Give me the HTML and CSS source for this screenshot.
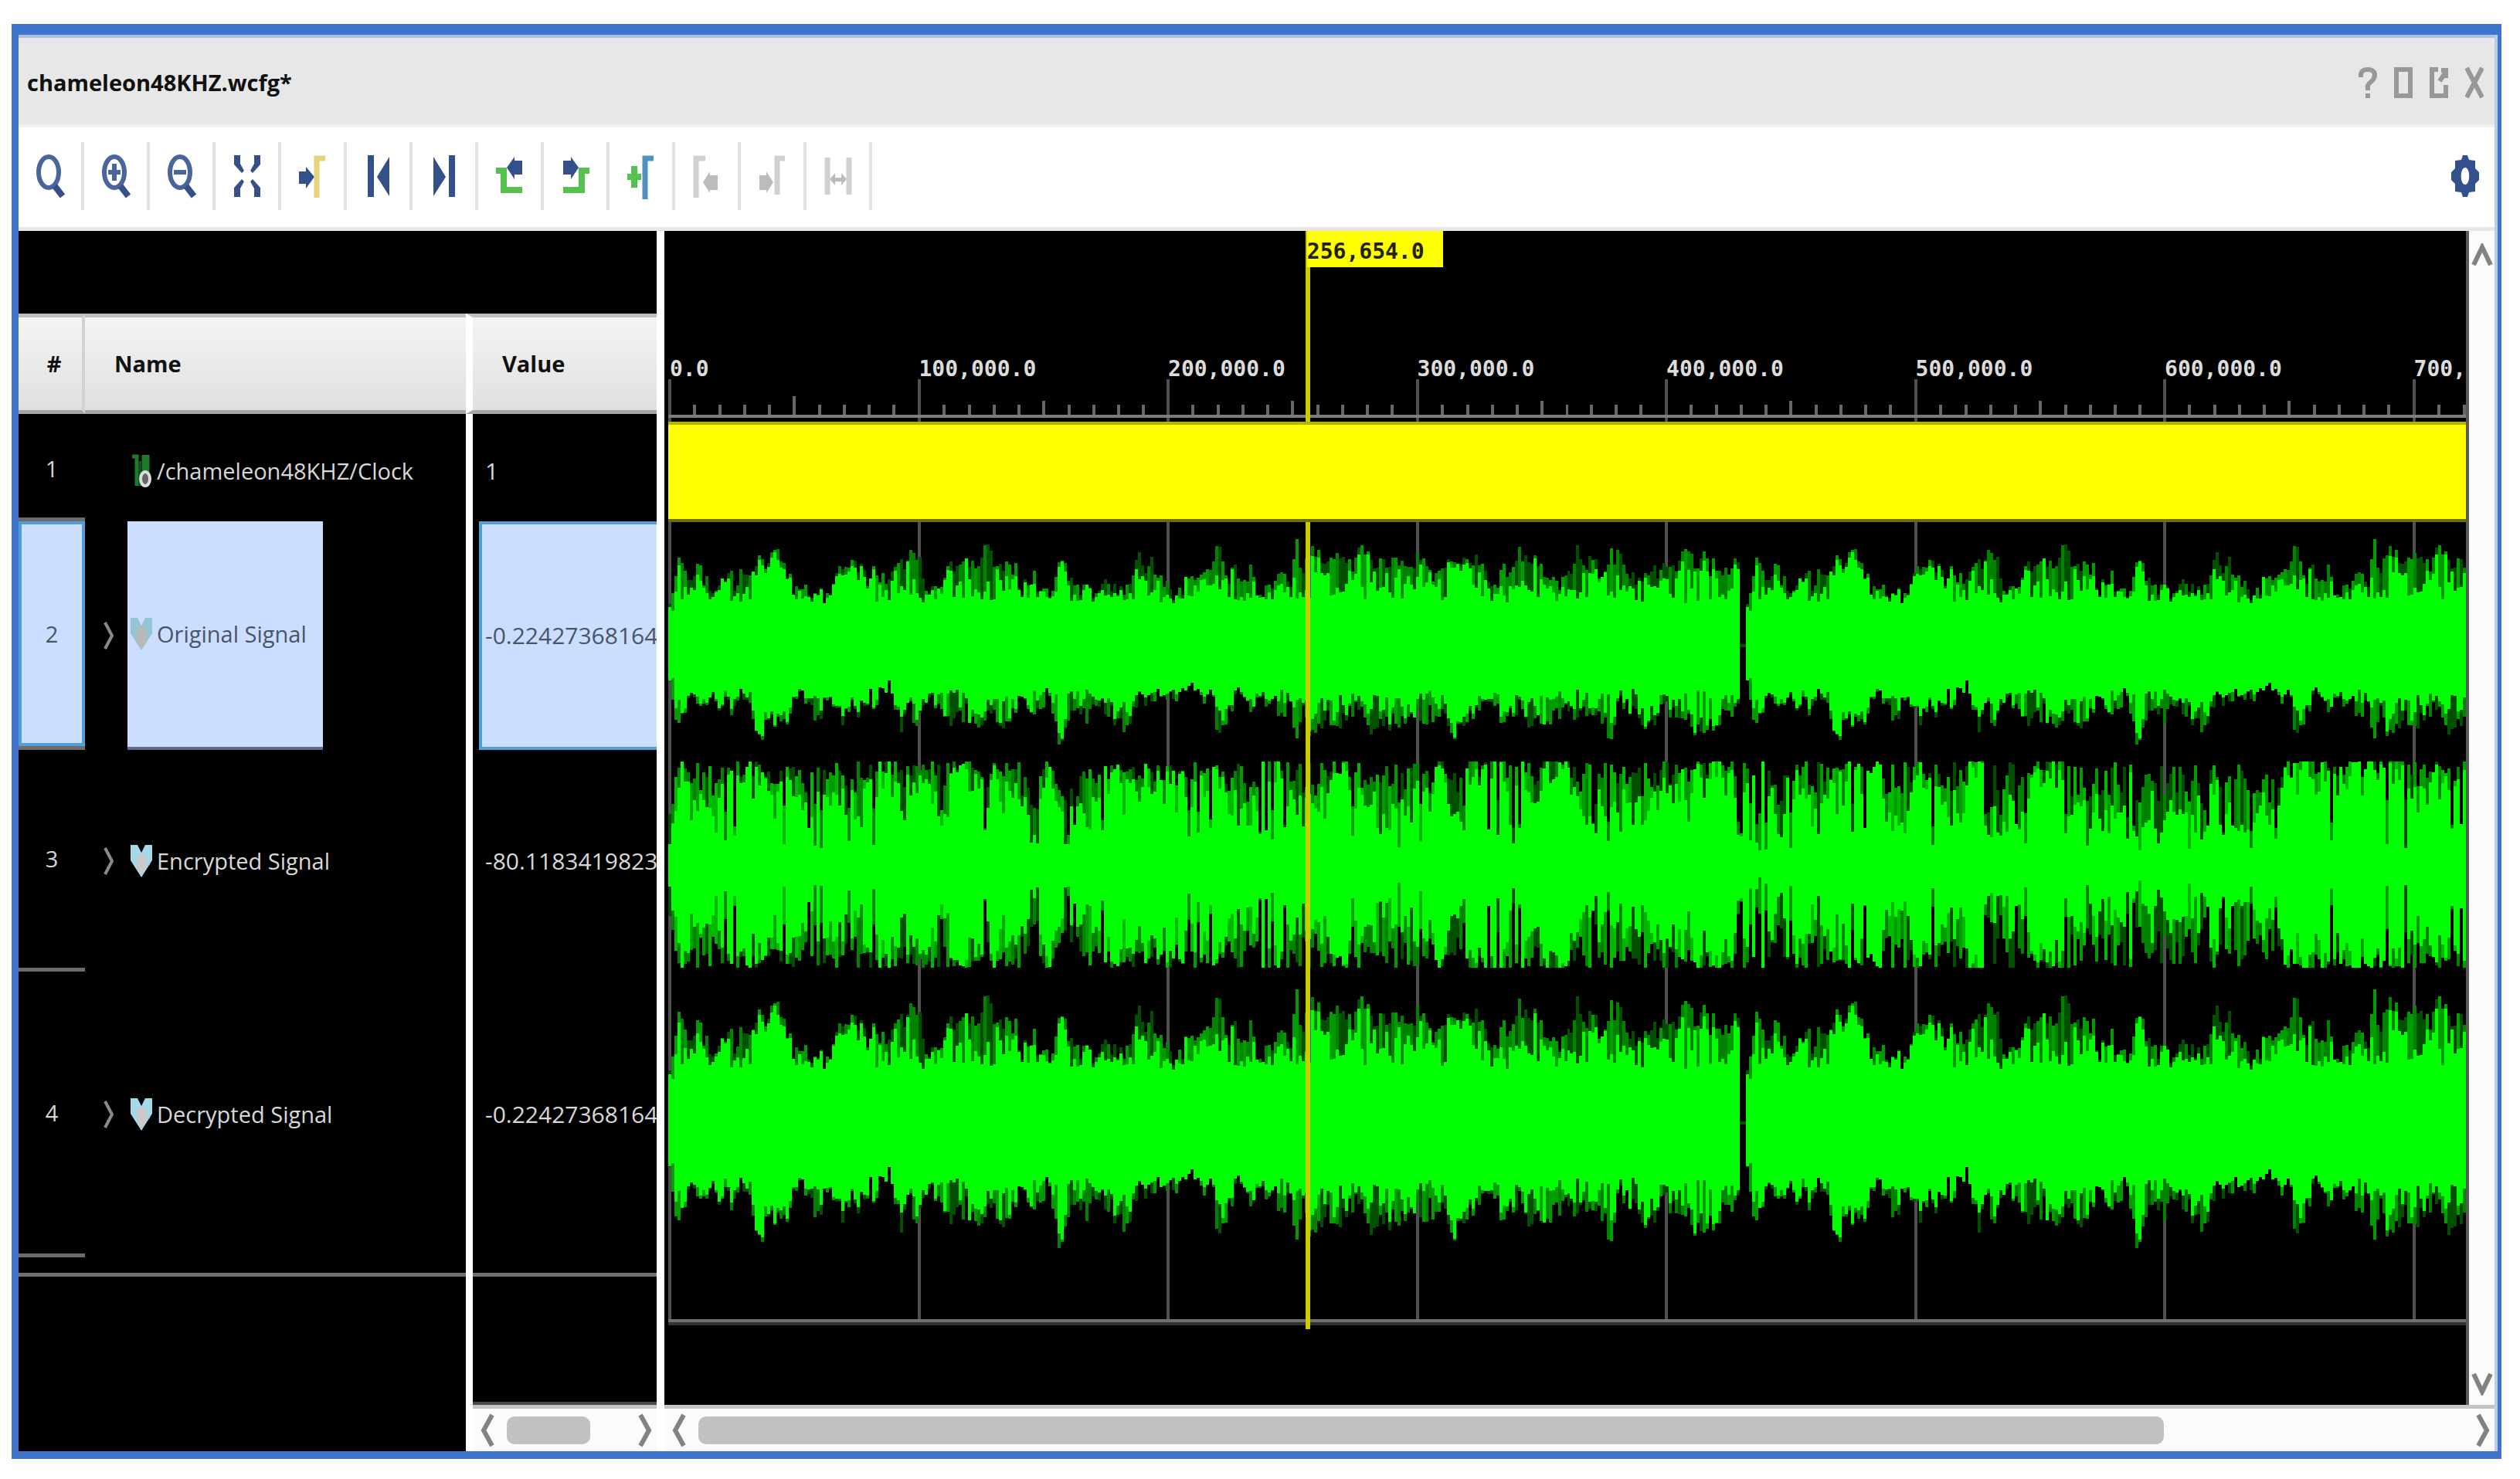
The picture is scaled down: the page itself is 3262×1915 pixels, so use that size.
FILE: index.html
```html
<!DOCTYPE html>
<html lang="en">
<head>
<meta charset="utf-8">
<title>chameleon48KHZ.wcfg*</title>
<link rel="stylesheet" href="styles.css">
</head>
<body>
<main class="window">
  <header class="titlebar">
    <h1 class="title">chameleon48KHZ.wcfg*</h1>
    <div class="window-buttons">
      <button class="win-btn" aria-label="Help"><svg viewBox="0 0 24 42"><path d="M3 14V10Q4 4 12 4T21 10Q21 16 16 20T12 27V31M12 35V41"/></svg></button>
      <button class="win-btn" aria-label="Maximize"><svg viewBox="0 0 24 42"><path d="M3 4H21V38H3Z"/></svg></button>
      <button class="win-btn" aria-label="Float"><svg viewBox="0 0 24 42"><path d="M11 4H3V38H21V24M13 19L21 7M15 5H22V15"/></svg></button>
      <button class="win-btn" aria-label="Close"><svg viewBox="0 0 24 42"><path d="M2 2L22 40M22 2L2 40"/></svg></button>
    </div>
  </header>

  <div class="toolbar">
    <button class="tool" aria-label="Find"><svg viewBox="0 0 44 60"><g class="navy"><ellipse cx="20" cy="25" rx="13" ry="20"/><path class="heavy" d="M28 43L38 56"/></g></svg></button>
    <button class="tool" aria-label="Zoom in"><svg viewBox="0 0 44 60"><g class="navy"><ellipse cx="20" cy="25" rx="13" ry="20"/><path class="heavy" d="M28 43L38 56"/><path d="M20 14V36M12 25H28"/></g></svg></button>
    <button class="tool" aria-label="Zoom out"><svg viewBox="0 0 44 60"><g class="navy"><ellipse cx="20" cy="25" rx="13" ry="20"/><path class="heavy" d="M28 43L38 56"/><path d="M12 25H28"/></g></svg></button>
    <button class="tool" aria-label="Zoom fit"><svg viewBox="0 0 44 60"><path class="navy-fill" d="M5 3H13V14L18 23L15 26L5 15ZM39 3H31V14L26 23L29 26L39 15ZM5 57H13V46L18 37L15 34L5 45ZM39 57H31V46L26 37L29 34L39 45Z"/></svg></button>
    <button class="tool" aria-label="Go to cursor"><svg viewBox="0 0 44 60"><path class="navy-fill" d="M4 24H13V18L24 31L13 46V40H4Z"/><path class="gold" d="M27 58V7H38"/></svg></button>
    <button class="tool" aria-label="Go to start"><svg viewBox="0 0 44 60"><path class="navy-fill" d="M8 3H16V57H8ZM36 5V56L20 31Z"/></svg></button>
    <button class="tool" aria-label="Go to end"><svg viewBox="0 0 44 60"><path class="navy-fill" d="M36 3H28V57H36ZM8 5V56L24 31Z"/></svg></button>
    <button class="tool" aria-label="Previous transition"><svg viewBox="0 0 44 60"><path class="green" d="M4 23H14V48H38"/><path class="navy-fill" d="M38 10H28V5L18 19L28 34V28H38Z"/></svg></button>
    <button class="tool" aria-label="Next transition"><svg viewBox="0 0 44 60"><path class="green" d="M40 23H30V48H6"/><path class="navy-fill" d="M6 10H16V5L26 19L16 34V28H6Z"/></svg></button>
    <button class="tool" aria-label="Add marker"><svg viewBox="0 0 44 60"><path class="green" d="M4 31H22M13 17V45"/><path class="blue" d="M27 60V7H38"/></svg></button>
    <button class="tool" aria-label="Previous marker" disabled><svg viewBox="0 0 44 60"><path class="grey" d="M8 58V7H20"/><path class="grey-fill" d="M36 29H26V24L17 38L26 52V48H36Z"/></svg></button>
    <button class="tool" aria-label="Next marker" disabled><svg viewBox="0 0 44 60"><path class="grey" d="M28 54V7H38"/><path class="grey-fill" d="M5 29H14V24L23 38L14 52V48H5Z"/></svg></button>
    <button class="tool" aria-label="Swap cursors" disabled><svg viewBox="0 0 44 60"><path class="grey" d="M8 6V54M36 6V54"/><path class="grey-fill" d="M11 34L18 26V32H26V26L33 34L26 42V37H18V42Z"/></svg></button>
    <button class="settings" aria-label="Settings"><svg viewBox="0 0 36 54"><path class="navy-fill" fill-rule="evenodd" d="M15 0H21L23 6L31 7V17L36 22V32L31 37V47L23 48L21 54H15L13 48L5 47V37L0 32V22L5 17V7L13 6ZM18 16C11 16 11 38 18 38S25 16 18 16Z"/></svg></button>
  </div>

  <div class="workspace">
    <section class="signals">
      <div class="band"></div>
      <table class="signal-table">
        <thead>
          <tr><th class="c-num">#</th><th class="c-name">Name</th><th class="c-value">Value</th></tr>
        </thead>
        <tbody>
          <tr class="r-clock">
            <td class="c-num">1</td>
            <td class="c-name"><div class="name-line"><span class="chevron"></span><span class="entry"><svg class="sig-icon" viewBox="0 0 30 50"><path d="M3 6H9V44M18 4V26M23 4V26" fill="none" stroke="#1f7a2c" stroke-width="5"/><path d="M13 12V44" fill="none" stroke="#14521d" stroke-width="4"/><ellipse cx="20" cy="35" rx="6" ry="9" fill="#666" stroke="#ddd" stroke-width="4"/></svg>/chameleon48KHZ/Clock</span></div></td>
            <td class="c-value"><div class="val">1</div></td>
          </tr>
          <tr class="r-original selected">
            <td class="c-num"><div class="num">2</div></td>
            <td class="c-name"><div class="name-line"><svg class="chevron" viewBox="0 0 16 40"><path d="M3 3L12 20L3 37"/></svg><span class="entry"><svg class="sig-icon" viewBox="0 0 30 50"><path d="M1 4H10L15 14L20 4H29V24L15 46L1 24Z" fill="#94c5d4"/><path d="M9 20L15 14L22 20V34L15 44L9 34Z" fill="#b9b9b5"/></svg>Original Signal</span></div></td>
            <td class="c-value"><div class="val">-0.22427368164</div></td>
          </tr>
          <tr class="r-encrypted">
            <td class="c-num">3</td>
            <td class="c-name"><div class="name-line"><svg class="chevron" viewBox="0 0 16 40"><path d="M3 3L12 20L3 37"/></svg><span class="entry"><svg class="sig-icon" viewBox="0 0 30 50"><path d="M1 4H10L15 14L20 4H29V24L15 46L1 24Z" fill="#a4d9ec"/><path d="M9 20L15 14L22 20V34L15 44L9 34Z" fill="#c9c9c9"/></svg>Encrypted Signal</span></div></td>
            <td class="c-value"><div class="val">-80.1183419823</div></td>
          </tr>
          <tr class="r-decrypted">
            <td class="c-num">4</td>
            <td class="c-name"><div class="name-line"><svg class="chevron" viewBox="0 0 16 40"><path d="M3 3L12 20L3 37"/></svg><span class="entry"><svg class="sig-icon" viewBox="0 0 30 50"><path d="M1 4H10L15 14L20 4H29V24L15 46L1 24Z" fill="#a4d9ec"/><path d="M9 20L15 14L22 20V34L15 44L9 34Z" fill="#c9c9c9"/></svg>Decrypted Signal</span></div></td>
            <td class="c-value"><div class="val">-0.22427368164</div></td>
          </tr>
        </tbody>
      </table>
      <div class="below">
        <div class="below-names"></div>
        <div class="below-values">
          <div class="below-fill"></div>
          <div class="hscroll">
            <svg class="arrow-h" viewBox="0 0 18 44"><path d="M15 2L4 22L15 42"/></svg>
            <div class="track"><div class="thumb thumb-values"></div></div>
            <svg class="arrow-h" viewBox="0 0 18 44"><path d="M3 2L14 22L3 42"/></svg>
          </div>
        </div>
      </div>
    </section>

    <section class="waves">
      <div class="wave-row">
        <div class="wave-view">
          <svg class="plot" id="plot" viewBox="0 0 2328 1515" preserveAspectRatio="none" shape-rendering="crispEdges" role="img" aria-label="Waveforms"></svg>
          <div class="ruler">
            <span>0.0</span><span>100,000.0</span><span>200,000.0</span><span>300,000.0</span><span>400,000.0</span><span>500,000.0</span><span>600,000.0</span><span>700,000.0</span>
          </div>
          <div class="cursor-label">256,654.0</div>
        </div>
        <div class="vscroll">
          <svg class="arrow-v" viewBox="0 0 28 30"><path d="M3 28L14 5L25 28"/></svg>
          <svg class="arrow-v" viewBox="0 0 28 30"><path d="M3 2L14 25L25 2"/></svg>
        </div>
      </div>
      <div class="hscroll">
        <svg class="arrow-h" viewBox="0 0 18 44"><path d="M15 2L4 22L15 42"/></svg>
        <div class="track"><div class="thumb thumb-waves"></div></div>
        <svg class="arrow-h" viewBox="0 0 18 44"><path d="M3 2L14 22L3 42"/></svg>
      </div>
    </section>
  </div>
</main>
<script src="waves.js"></script>
</body>
</html>
```
FILE: styles.css
```css
* { box-sizing: border-box; }

body {
  margin: 0;
  min-height: 100vh;
  padding: 31px 24px 26px 15px;
  display: flex;
  background: #fff;
  color: #d8d8d8;
  font-family: "Open Sans", "Noto Sans", sans-serif;
  font-size: 29px;
  line-height: 44px;
}

button {
  margin: 0;
  padding: 0;
  border: 0;
  background: none;
  font: inherit;
}

.window {
  flex: 1;
  min-width: 0;
  display: flex;
  flex-direction: column;
  background: #fff;
  border: 9px solid #3f74cd;
  border-top-width: 14px;
  border-right-width: 5px;
  border-bottom-width: 10px;
  box-shadow: inset -4px 0 #bccbe6;
}

/* Title bar */

.titlebar {
  display: flex;
  align-items: center;
  justify-content: space-between;
  height: 120px;
  margin-right: 4px;
  padding: 4px 14px 0 11px;
  background: #e7e7e7;
  border-top: 4px solid #aabfe0;
  border-bottom: 4px solid #f2f2f2;
}

.title {
  margin: 0;
  color: #111;
  font-size: 29px;
  font-weight: bold;
}

.window-buttons { display: flex; gap: 22px; }

.win-btn { width: 24px; height: 42px; }

.win-btn svg {
  display: block;
  width: 24px;
  height: 42px;
  fill: none;
  stroke: #989898;
  stroke-width: 6;
}

/* Toolbar */

.toolbar {
  display: flex;
  align-items: center;
  height: 134px;
  margin-right: 4px;
  padding-bottom: 4px;
  border-bottom: 5px solid #e7e7e7;
}

.tool {
  width: 85px;
  height: 88px;
  display: flex;
  align-items: center;
  justify-content: center;
  border-right: 4px solid #e2e2e2;
}

.tool svg { width: 44px; height: 60px; }

.settings { margin-left: auto; margin-right: 20px; }

.settings svg { display: block; width: 36px; height: 54px; }

.navy { fill: none; stroke: #4a659c; stroke-width: 6; }
.heavy { stroke: #33508b; stroke-width: 8; }
.navy-fill { fill: #33508b; }
.gold { fill: none; stroke: #e6d27a; stroke-width: 7; }
.green { fill: none; stroke: #55c24e; stroke-width: 8; }
.blue { fill: none; stroke: #4f91c3; stroke-width: 7; }
.grey { fill: none; stroke: #d0d0d0; stroke-width: 7; }
.grey-fill { fill: #bcbcbc; }

/* Panels */

.workspace { flex: 1; display: flex; min-height: 0; }

.signals {
  width: 826px;
  display: flex;
  flex-direction: column;
}

.band { height: 107px; background: #000; }

.signal-table {
  width: 100%;
  table-layout: fixed;
  border-collapse: separate;
  border-spacing: 0;
  background: #000;
}

.signal-table th {
  height: 130px;
  padding: 0;
  border-top: 5px solid #bebebe;
  border-bottom: 5px solid #a5a5a5;
  background: linear-gradient(#f4f4f4, #e0e0e2);
  color: #111;
  font-size: 29px;
  text-align: left;
}

.signal-table td { padding: 0; }

.c-num { width: 86px; text-align: center; }

.signal-table th.c-num {
  padding-left: 10px;
  text-align: center;
  border-right: 4px solid #d2d2d2;
}

.signal-table th.c-name { padding-left: 38px; }

.signal-table th.c-value {
  padding-left: 38px;
  border-left: 9px solid #fff;
}

.c-value { width: 247px; }

td.c-value { border-left: 9px solid #fff; }

td.c-num { border-bottom: 5px solid #6c6c6c; }

.r-clock { height: 139px; }
.r-original { height: 296px; }
.r-encrypted { height: 287px; }
.r-decrypted { height: 370px; }

.signal-table .r-clock td { padding-top: 8px; }

.name-line {
  height: 100%;
  display: flex;
  align-items: center;
  gap: 16px;
  padding-left: 23px;
}

.chevron {
  flex: none;
  width: 16px;
  height: 40px;
  fill: none;
  stroke: #8a8a8a;
  stroke-width: 4;
}

.entry {
  display: flex;
  align-items: center;
  gap: 5px;
  padding: 0 21px 0 3px;
  white-space: nowrap;
}

.sig-icon { flex: none; width: 30px; height: 50px; }

.val {
  display: flex;
  align-items: center;
  margin-left: 8px;
  padding-left: 8px;
  font-size: 30px;
  overflow: hidden;
  white-space: nowrap;
}

.selected .num,
.selected .val {
  height: 291px;
  background: #ccdeff;
  border: 4px solid #4f9ed4;
  color: #4a5468;
}

.selected .num { line-height: 283px; }

.selected .val {
  height: 296px;
  padding-left: 4px;
  border-right: 0;
}

.selected .entry {
  height: 296px;
  background: #ccdeff;
  border-bottom: 4px solid #5f6b85;
  color: #4a5468;
}

.below { flex: 1; display: flex; background: #000; }

.below-names {
  flex: 1;
  margin-top: 20px;
  border-top: 5px solid #707070;
}

.below-values {
  width: 247px;
  display: flex;
  flex-direction: column;
  border-left: 9px solid #fff;
}

.below-fill {
  flex: 1;
  margin-top: 20px;
  border-top: 5px solid #707070;
  border-bottom: 4px solid #4a4a4a;
}

/* Scroll bars */

.hscroll {
  height: 60px;
  display: flex;
  align-items: center;
  padding: 0 6px 0 10px;
  background: #fbfbfb;
  border-top: 5px solid #c4c4c4;
}

.arrow-h, .arrow-v {
  flex: none;
  fill: none;
  stroke: #828282;
  stroke-width: 6;
}

.arrow-h { width: 18px; height: 44px; }

.arrow-v { width: 28px; height: 30px; }

.track { flex: 1; padding: 0 16px; }

.thumb {
  height: 36px;
  border-radius: 10px;
  background: #c1c1c1;
}

.thumb-values { width: 70%; }

.thumb-waves { width: 83%; }

/* Waveforms */

.waves {
  flex: 1;
  min-width: 0;
  display: flex;
  flex-direction: column;
  margin-left: 10px;
  margin-right: 4px;
}

.wave-row { flex: 1; display: flex; min-height: 0; }

.wave-view {
  flex: 1;
  min-width: 0;
  display: grid;
  position: relative;
  padding-left: 5px;
  background: #000;
  border-right: 4px solid #5a5a5a;
}

.plot {
  grid-area: 1 / 1;
  width: 100%;
  height: 100%;
  min-height: 0;
}

.ruler {
  grid-area: 1 / 1;
  display: grid;
  grid-template-columns: repeat(7, 13.86%) 1fr;
  align-content: start;
  padding-top: 157px;
  overflow: hidden;
  color: #dcdcdc;
  font: bold 28px/44px "DejaVu Sans Mono", monospace;
}

.ruler span { min-width: 0; padding-left: 2px; }

.cursor-label {
  position: absolute;
  left: calc(35.5% + 4px);
  top: 0;
  width: 176px;
  height: 47px;
  background: #ff0;
  color: #222200;
  font: bold 28px/54px "DejaVu Sans Mono", monospace;
}

.vscroll {
  width: 33px;
  display: flex;
  flex-direction: column;
  align-items: center;
  justify-content: space-between;
  padding: 16px 0 12px;
  background: #fbfbfb;
}
```
FILE: waves.js
```js
// Draws the time ruler, the clock band and the three analog traces.
const W = 2328;
const STEP = 4;
const MAJOR = 322.7;
const GRID = 1.452; // envelope x units per plot unit
const PERIOD = 1396;

// Outer envelope of the audio as [x, y] pairs around the level ZERO.
const ZERO = 1241;
const TOP = [38,1120,48,1010,60,958,68,1045,80,1060,95,1000,105,1040,125,1075,137,1020,150,1035,165,1045,180,1010,192,1000,205,962,215,990,235,980,252,972,262,1040,280,1070,295,1060,310,1085,340,1085,350,1040,358,985,375,1000,390,995,405,1030,432,1020,445,1060,455,1030,472,955,482,1020,497,948,512,1000,525,1080,545,1060,565,1005,590,1010,610,980,622,980,629,935,640,975,660,1000,675,985,690,1020,700,1060,725,1035,735,1080,755,1085,765,1030,773,958,782,1010,800,1060,830,1070,850,1040,860,1070,885,1060,905,1040,925,960,935,1030,943,980,952,1040,965,1050,985,1090,1000,1060,1030,1020,1045,1030,1060,1010,1069,910,1078,1000,1090,1040,1105,1010,1118,1050,1128,1010,1140,1060,1170,1065,1188,1030,1205,1040,1216,935,1228,1010,1245,960,1260,980,1280,1000,1300,958,1320,1000,1335,960,1350,975,1370,1000,1400,980,1430,1010,1450,965,1470,1020,1485,1040,1505,990,1525,970,1539,999,1562,976,1588,1053,1604,1022,1623,991,1639,960,1652,983,1672,983,1688,1022,1714,1061,1746,960,1756,1007,1772,976,1788,1030,1806,960,1831,991,1850,1022,1882,1037,1899,1007,1915,1022,1928,1007,1952,956,1967,1007,1982,968,1993,1014,2004,991,2019,1037,2031,999,2051,1007,2070,1007];
const BOTTOM = [38,1340,52,1500,62,1440,75,1410,88,1440,110,1400,150,1440,165,1400,185,1420,200,1490,215,1505,230,1480,250,1500,270,1420,285,1380,300,1450,317,1465,340,1390,362,1480,380,1440,405,1440,415,1400,425,1430,450,1350,460,1400,472,1510,482,1420,505,1470,520,1400,545,1420,570,1480,595,1450,623,1505,635,1450,665,1490,690,1420,720,1440,745,1400,760,1430,767,1530,785,1480,800,1430,820,1460,840,1430,865,1450,900,1490,920,1420,950,1400,985,1420,1010,1380,1040,1410,1055,1380,1072,1525,1090,1430,1110,1400,1130,1440,1165,1410,1190,1440,1205,1430,1213,1520,1228,1440,1240,1490,1255,1500,1275,1470,1293,1500,1310,1450,1330,1440,1355,1500,1380,1470,1410,1490,1440,1450,1465,1460,1485,1450,1515,1505,1539,1469,1571,1423,1588,1408,1604,1485,1623,1446,1646,1439,1656,1508,1675,1469,1701,1454,1733,1454,1759,1446,1792,1462,1809,1531,1824,1423,1850,1454,1882,1485,1902,1439,1928,1446,1960,1485,1982,1500,2006,1469,2025,1469,2051,1446,2070,1446];

function lookup(points, x) {
  let i = 2;
  while (i < points.length - 2 && points[i] < x) i += 2;
  const [x0, y0, x1, y1] = points.slice(i - 2, i + 2);
  const t = Math.min(1, Math.max(0, (x - x0) / (x1 - x0)));
  return y0 + (y1 - y0) * t;
}

function random(seed) {
  let s = seed;
  return () => {
    s = (s * 1664525 + 1013904223) % 4294967296;
    return s / 4294967296;
  };
}

const BRIGHT = '#00ff00';
const DARK = ['#005000', '#008400', '#009c00', '#00b800'];

const paths = {};
function bar(color, x, y0, y1) {
  paths[color] = (paths[color] || '') + `M${x} ${y0.toFixed(0)}h${STEP}V${y1.toFixed(0)}h-${STEP}z`;
}

// The clip is one period long and then starts again.
function audio(center, gain) {
  const cols = [];
  const r = random(7);
  for (let x = 0; x < PERIOD; x += STEP) {
    const u = x * GRID + 38;
    const top = Math.max(45, (ZERO - lookup(TOP, u)) / 2.24 - r() * 24 + 6);
    const bottom = Math.max(45, (lookup(BOTTOM, u) - ZERO) / 2.24 - r() * 26 + 6);
    const full = (u > 190 && u < 272) || (u > 350 && u < 408) || (u > 765 && u < 785) || (u > 1500 && u < 1545);
    const a = full ? 0.7 + r() * 0.3 : Math.pow(r(), 1.4);
    const b = full ? 0.7 + r() * 0.3 : Math.pow(r(), 1.1);
    const baseT = x < 8 ? 45 : 54 + r() * 12;
    const baseB = x < 8 ? 40 : 54 + r() * 14;
    cols.push([
      top,
      bottom,
      baseT + Math.max(0, top - baseT) * a,
      baseB + Math.max(0, bottom - baseB) * b,
      DARK[Math.floor(r() * 3)],
    ]);
  }
  for (let x = 0; x < W; x += STEP) {
    const p = x % PERIOD;
    if (p >= PERIOD - 8) {
      bar(DARK[0], x, center - 2, center + 2);
      continue;
    }
    const [t, b, it, ib, dark] = cols[p / STEP];
    bar(dark, x, center - t * gain, center + b * gain);
    bar(BRIGHT, x, center - Math.min(t, it) * gain, center + Math.min(b, ib) * gain);
  }
}

function cipher(center) {
  const r = random(42);
  let level = 0.6;
  for (let x = 0; x < W; x += STEP) {
    level = Math.min(1, Math.max(0.1, level + (r() - 0.5) * 0.9));
    const gap = r() < 0.14;
    const outer = gap ? 40 + r() * 45 : 84 + 50 * Math.max(level, r());
    const inner = gap ? 20 + r() * 35 : Math.min(outer, 34 + level * 70 + r() * 40);
    const skew = r() * 10 - 5;
    bar(DARK[Math.floor(r() * 4)], x, center - outer, center + Math.min(132, outer + skew));
    bar(BRIGHT, x, center - inner, center + Math.min(132, inner + skew));
  }
}

audio(535, 1);
cipher(819);
audio(1151, 1.26);

const rect = (x, y, w, h, fill) => `<rect x="${x}" y="${y}" width="${w}" height="${h}" fill="${fill}"/>`;
let out = '';
for (let i = 0; i * MAJOR < W; i++) {
  const x = Math.round(i * MAJOR);
  out += rect(x, 191, 4, 1217, '#505050');
  for (let k = 1; k < 10; k++) {
    const y = i === 0 && k === 5 ? 213 : k === 5 ? 219 : 224;
    out += rect(Math.round(x + k * MAJOR / 10), y, 4, 237 - y, '#686868');
  }
}
for (const color of [...DARK, BRIGHT]) {
  out += `<path d="${paths[color]}" fill="${color}"/>`;
}
out += rect(0, 237, W, 4, '#7c7c80');
out += rect(0, 1404, W, 4, '#707070') + rect(0, 1408, W, 4, '#333333');
out += rect(825, 0, 6, 1417, '#cccc00');
out += rect(0, 246, W, 4, '#b5b500') + rect(0, 250, W, 122, '#ffff00') + rect(0, 372, W, 4, '#6d6d00');
document.getElementById('plot').innerHTML = out;
```
